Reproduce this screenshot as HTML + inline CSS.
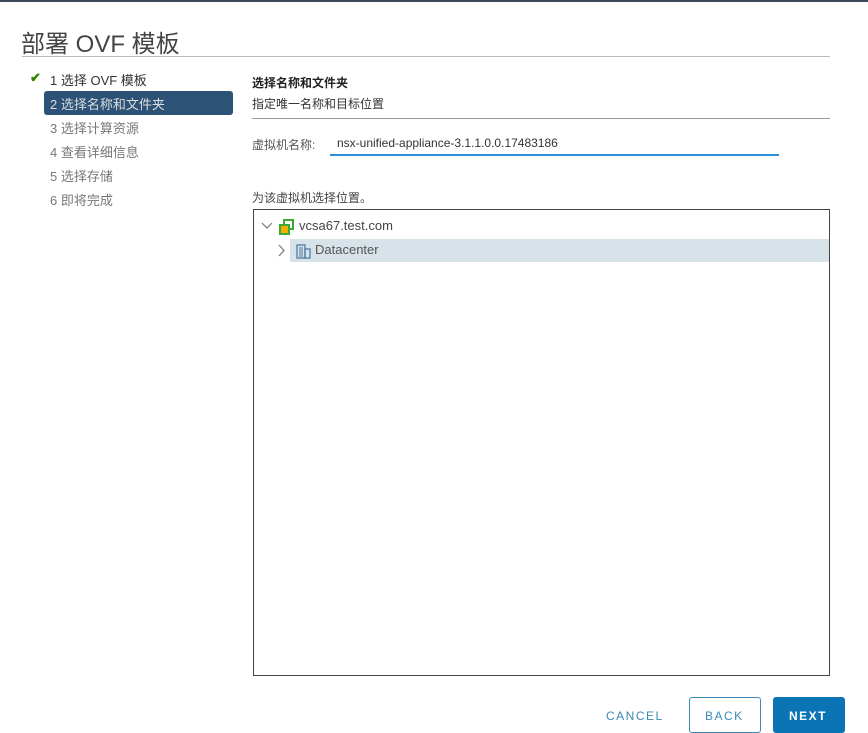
<!DOCTYPE html>
<html><head><meta charset="utf-8"><style>
body{margin:0;width:868px;height:732px;background:#fff;font-family:"Liberation Sans","Noto Sans CJK SC",sans-serif;position:relative;overflow:hidden;color:#333}
.a{position:absolute;white-space:nowrap}
.s{font-size:13px;color:#777;left:50px}
</style></head><body>
<div class="a" style="left:0;top:0;width:868px;height:2px;background:#3c4b5a"></div>
<div class="a" style="left:21px;top:24px;font-size:24px;color:#444;">部署 OVF 模板</div>
<div class="a" style="left:22px;top:56px;width:808px;height:1px;background:#bbb"></div>
<div class="a" style="left:30px;top:70px;font-size:13px;color:#2f8400;font-weight:bold">✔</div>
<div class="a" style="left:50px;top:70px;font-size:13px;color:#333">1 选择 OVF 模板</div>
<div class="a" style="left:44px;top:91px;width:189px;height:24px;background:#2c5278;border-radius:3px"></div>
<div class="a" style="left:50px;top:94px;font-size:13px;color:#ddd">2 选择名称和文件夹</div>
<div class="a s" style="top:118px">3 选择计算资源</div>
<div class="a s" style="top:142px">4 查看详细信息</div>
<div class="a s" style="top:166px">5 选择存储</div>
<div class="a s" style="top:190px">6 即将完成</div>
<div class="a" style="left:252px;top:74px;font-size:12px;font-weight:bold;color:#222">选择名称和文件夹</div>
<div class="a" style="left:252px;top:95px;font-size:12px;color:#333">指定唯一名称和目标位置</div>
<div class="a" style="left:252px;top:118px;width:578px;height:1px;background:#999"></div>
<div class="a" style="left:252px;top:136px;font-size:12px;color:#555">虚拟机名称:</div>
<div class="a" style="left:337px;top:136px;font-size:12px;color:#333">nsx-unified-appliance-3.1.1.0.0.17483186</div>
<div class="a" style="left:330px;top:154px;width:449px;height:2px;background:#2b8ed8"></div>
<div class="a" style="left:252px;top:189px;font-size:12px;color:#444">为该虚拟机选择位置。</div>
<div class="a" style="left:253px;top:209px;width:575px;height:465px;border:1px solid #444"></div>
<svg class="a" style="left:261px;top:221px" width="12" height="10"><path d="M1 2 L6 7 L11 2" fill="none" stroke="#777" stroke-width="1.2"/></svg>
<svg class="a" style="left:279px;top:219px" width="16" height="16"><rect x="5" y="1" width="9" height="9" fill="none" stroke="#3aa935" stroke-width="2"/><rect x="1" y="6" width="9" height="9" fill="#f5b000" stroke="#3aa935" stroke-width="2"/></svg>
<div class="a" style="left:299px;top:218px;font-size:13px;color:#444">vcsa67.test.com</div>
<div class="a" style="left:290px;top:239px;width:539px;height:23px;background:#d8e3e9"></div>
<svg class="a" style="left:277px;top:244px" width="10" height="14"><path d="M2 1 L7 6.5 L2 12" fill="none" stroke="#777" stroke-width="1.2"/></svg>
<svg class="a" style="left:296px;top:243px" width="16" height="16"><rect x="1" y="2" width="8" height="13" fill="none" stroke="#4a7ca8" stroke-width="1.3"/><rect x="9" y="6" width="5" height="9" fill="none" stroke="#4a7ca8" stroke-width="1.3"/><path d="M4 4V14M6 4V14" stroke="#4a7ca8"/></svg>
<div class="a" style="left:315px;top:242px;font-size:13px;color:#555">Datacenter</div>
<div class="a" style="left:606px;top:709px;font-size:12px;letter-spacing:1.5px;color:#3b8ab4">CANCEL</div>
<div class="a" style="left:689px;top:697px;height:36px;border:1px solid #3b8ab4;border-radius:3px;box-sizing:border-box;width:72px"></div>
<div class="a" style="left:705px;top:709px;font-size:12px;letter-spacing:1.5px;color:#3b8ab4">BACK</div>
<div class="a" style="left:773px;top:697px;width:72px;height:36px;background:#0a74b5;border-radius:3px"></div>
<div class="a" style="left:789px;top:709px;font-size:12px;letter-spacing:1.5px;color:#fff;font-weight:bold">NEXT</div>
</body></html>
